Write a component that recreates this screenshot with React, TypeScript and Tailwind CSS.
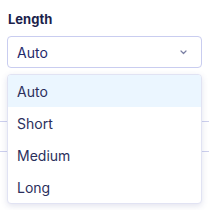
import React from 'react';

const options = ['Auto', 'Short', 'Medium', 'Long'];

export default function App() {
  return (
    <div className="w-[209px] h-[210px] bg-white overflow-hidden" style={{ fontFamily: 'Inter, "Noto Sans", sans-serif' }}>
      <div className="px-[7px] pt-[9px]">
        <label className="block pl-px text-[13px] font-bold text-[#1b1f4b] leading-[20px]">Length</label>
        <div className="relative mt-[7px]">
          <button className="w-full h-[32px] flex items-center justify-between pl-[9px] pr-[14px] border border-[#c9cdf0] rounded-[4px] bg-white">
            <span className="text-[14px] text-[#1f2a6b]">Auto</span>
            <svg width="7" height="5" viewBox="0 0 7 5" fill="none">
              <path d="M1 1l2.5 2.5L6 1" stroke="#7a7fa3" strokeWidth="1.2" strokeLinecap="round" strokeLinejoin="round" />
            </svg>
          </button>

          {/* content underneath the menu */}
          <div className="-mx-[7px] mt-[53px]">
            <div className="h-[30px] border-t border-[#cdd0ee]" />
            <div className="h-[30px] border-t border-[#cdd0ee]" />
          </div>

          <ul className="absolute left-0 right-0 top-[38px] bg-white border border-[#e1e3f3] rounded-[4px] shadow-[0_2px_6px_rgba(60,70,140,0.15)] overflow-hidden">
            {options.map((o, i) => (
              <li
                key={o}
                className={`h-[32px] flex items-center pl-[9px] text-[14px] text-[#2b2f5c] ${i === 0 ? 'bg-[#ebf6ff]' : ''}`}
              >
                {o}
              </li>
            ))}
          </ul>
        </div>
      </div>
    </div>
  );
}
